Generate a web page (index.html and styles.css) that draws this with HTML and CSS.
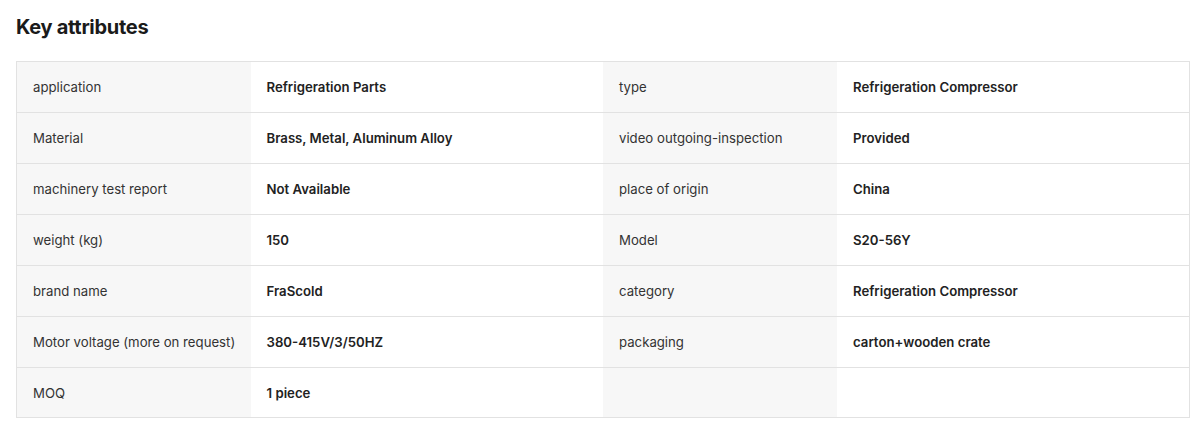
FILE: index.html
```html
<!DOCTYPE html>
<html lang="en">
<head>
  <meta charset="UTF-8" />
  <title>Key attributes</title>
  <link rel="stylesheet" href="styles.css">
</head>
<body>
  <div class="attributes">
    <h2 class="title">Key attributes</h2>
    <table class="attr-table">
      <colgroup>
        <col class="col-key">
        <col class="col-value">
        <col class="col-key">
        <col class="col-value">
      </colgroup>
      <tr>
        <td class="key">application</td>
        <td class="value">Refrigeration Parts</td>
        <td class="key">type</td>
        <td class="value">Refrigeration Compressor</td>
      </tr>
      <tr>
        <td class="key">Material</td>
        <td class="value">Brass, Metal, Aluminum Alloy</td>
        <td class="key">video outgoing-inspection</td>
        <td class="value">Provided</td>
      </tr>
      <tr>
        <td class="key">machinery test report</td>
        <td class="value">Not Available</td>
        <td class="key">place of origin</td>
        <td class="value">China</td>
      </tr>
      <tr>
        <td class="key">weight (kg)</td>
        <td class="value">150</td>
        <td class="key">Model</td>
        <td class="value">S20-56Y</td>
      </tr>
      <tr>
        <td class="key">brand name</td>
        <td class="value">FraScold</td>
        <td class="key">category</td>
        <td class="value">Refrigeration Compressor</td>
      </tr>
      <tr>
        <td class="key">Motor voltage (more on request)</td>
        <td class="value">380-415V/3/50HZ</td>
        <td class="key">packaging</td>
        <td class="value">carton+wooden crate</td>
      </tr>
      <tr class="last">
        <td class="key">MOQ</td>
        <td class="value">1 piece</td>
        <td class="key"></td>
        <td class="value"></td>
      </tr>
    </table>
  </div>
</body>
</html>
```

FILE: styles.css
```css
body {
  margin: 0;
  padding: 0;
  background: #fff;
  font-family: 'Inter', 'Noto Sans', sans-serif;
  color: #222;
}

.attributes {
  padding: 16px 10px 0 16px;
}

.title {
  margin: 0 0 23px 0;
  font-size: 20px;
  line-height: 22px;
  font-weight: 700;
  color: #1a1a1a;
  letter-spacing: -0.3px;
}

.attr-table {
  width: 100%;
  border-collapse: collapse;
  border: 1px solid #e2e2e2;
  table-layout: fixed;
}

.col-key {
  width: 234px;
}

.col-value {
  width: auto;
}

.attr-table tr {
  height: 51px;
  border-bottom: 1px solid #e2e2e2;
}

.attr-table tr.last {
  height: 50px;
}

.attr-table td {
  padding: 0 16px;
  font-size: 13.2px;
  vertical-align: middle;
  white-space: nowrap;
}

.key {
  background-color: #f7f7f7;
  color: #333;
  font-weight: 400;
}

.value {
  color: #222;
  font-weight: 600;
  font-size: 13.4px;
}
```
